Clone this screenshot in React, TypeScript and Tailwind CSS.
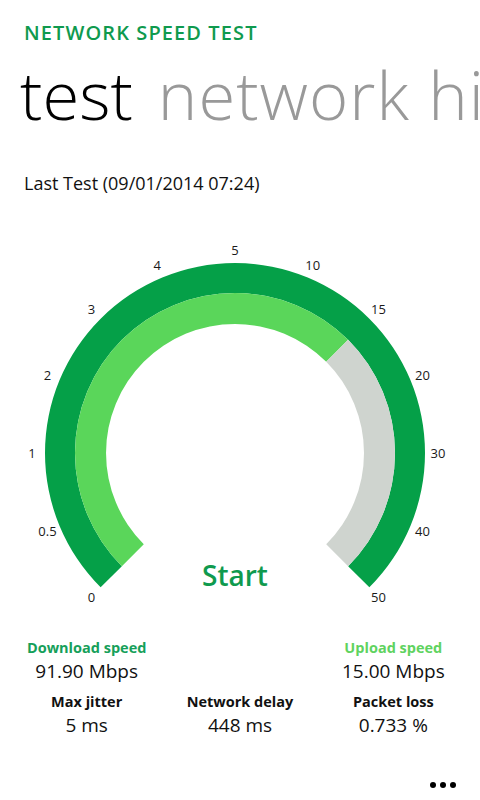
import React from "react";

const CX = 235;
const CY = 213;

function pt(r: number, deg: number) {
  const a = (deg * Math.PI) / 180;
  return [CX + r * Math.cos(a), CY - r * Math.sin(a)];
}

// annular sector going clockwise on screen from a0 to a1 (math degrees)
function sector(r1: number, r2: number, a0: number, a1: number) {
  const large = a0 - a1 > 180 ? 1 : 0;
  const [ox0, oy0] = pt(r2, a0);
  const [ox1, oy1] = pt(r2, a1);
  const [ix1, iy1] = pt(r1, a1);
  const [ix0, iy0] = pt(r1, a0);
  return `M ${ox0} ${oy0} A ${r2} ${r2} 0 ${large} 1 ${ox1} ${oy1} L ${ix1} ${iy1} A ${r1} ${r1} 0 ${large} 0 ${ix0} ${iy0} Z`;
}

const ticks = ["0", "0.5", "1", "2", "3", "4", "5", "10", "15", "20", "30", "40", "50"];

function Gauge() {
  return (
    <svg width="480" height="372" viewBox="0 0 480 372" className="block">
      <path d={sector(160, 190, 225, -45)} fill="#05a048" />
      <path d={sector(129, 160, 225, 45)} fill="#5ad65a" />
      <path d={sector(129, 160, 45, -45)} fill="#cfd4cf" />
      {ticks.map((t, i) => {
        const [x, y] = pt(203, 225 - i * 22.5);
        return (
          <text
            key={t}
            x={x}
            y={y}
            textAnchor="middle"
            dominantBaseline="central"
            fontSize="13"
            fill="#1a1a1a"
            fontFamily="'Open Sans', sans-serif"
          >
            {t}
          </text>
        );
      })}
      <text
        x={CX}
        y={335}
        textAnchor="middle"
        dominantBaseline="central"
        fontSize="28"
        fontWeight="600"
        fill="#0f9a4e"
        fontFamily="'Open Sans', sans-serif"
      >
        Start
      </text>
    </svg>
  );
}

function Stat({ label, value, tone }: { label: string; value: string; tone?: string }) {
  return (
    <div className="flex flex-col items-center">
      <span className={`text-[14.5px] font-bold leading-[20px] ${tone ?? "text-[#111]"}`}>{label}</span>
      <span className="text-[19px] leading-[26px] text-[#111]">{value}</span>
    </div>
  );
}

export default function App() {
  return (
    <div className="w-[480px] h-[800px] overflow-hidden bg-white font-['Open_Sans',sans-serif] relative">
      <div className="px-6 pt-[19px]">
        <div className="text-[20px] font-semibold leading-[28px] text-[#0f9a4e] tracking-[1.1px]">
          NETWORK SPEED TEST
        </div>
      </div>
      <div className="whitespace-nowrap pl-[20px] text-[67px] font-light leading-[80px] mt-[7px]">
        <span className="text-black">test</span>
        <span className="ml-[25px] text-[#999] tracking-[1px]">network history</span>
      </div>
      <div className="px-6 mt-[37px] text-[18px] leading-[24px] text-[#111]">
        Last Test (09/01/2014 07:24)
      </div>
      <div className="mt-[45px]">
        <Gauge />
      </div>
      <div className="grid grid-cols-3 px-[10px] mt-[26px]">
        <Stat label="Download speed" value="91.90 Mbps" tone="text-[#16a05a]" />
        <div />
        <Stat label="Upload speed" value="15.00 Mbps" tone="text-[#5fd35f]" />
      </div>
      <div className="grid grid-cols-3 px-[10px] mt-[8px]">
        <Stat label="Max jitter" value="5 ms" />
        <Stat label="Network delay" value="448 ms" />
        <Stat label="Packet loss" value="0.733 %" />
      </div>
      <div className="absolute right-[24px] bottom-[12px] flex gap-[4px]">
        <span className="w-[6px] h-[6px] rounded-full bg-black" />
        <span className="w-[6px] h-[6px] rounded-full bg-black" />
        <span className="w-[6px] h-[6px] rounded-full bg-black" />
      </div>
    </div>
  );
}
